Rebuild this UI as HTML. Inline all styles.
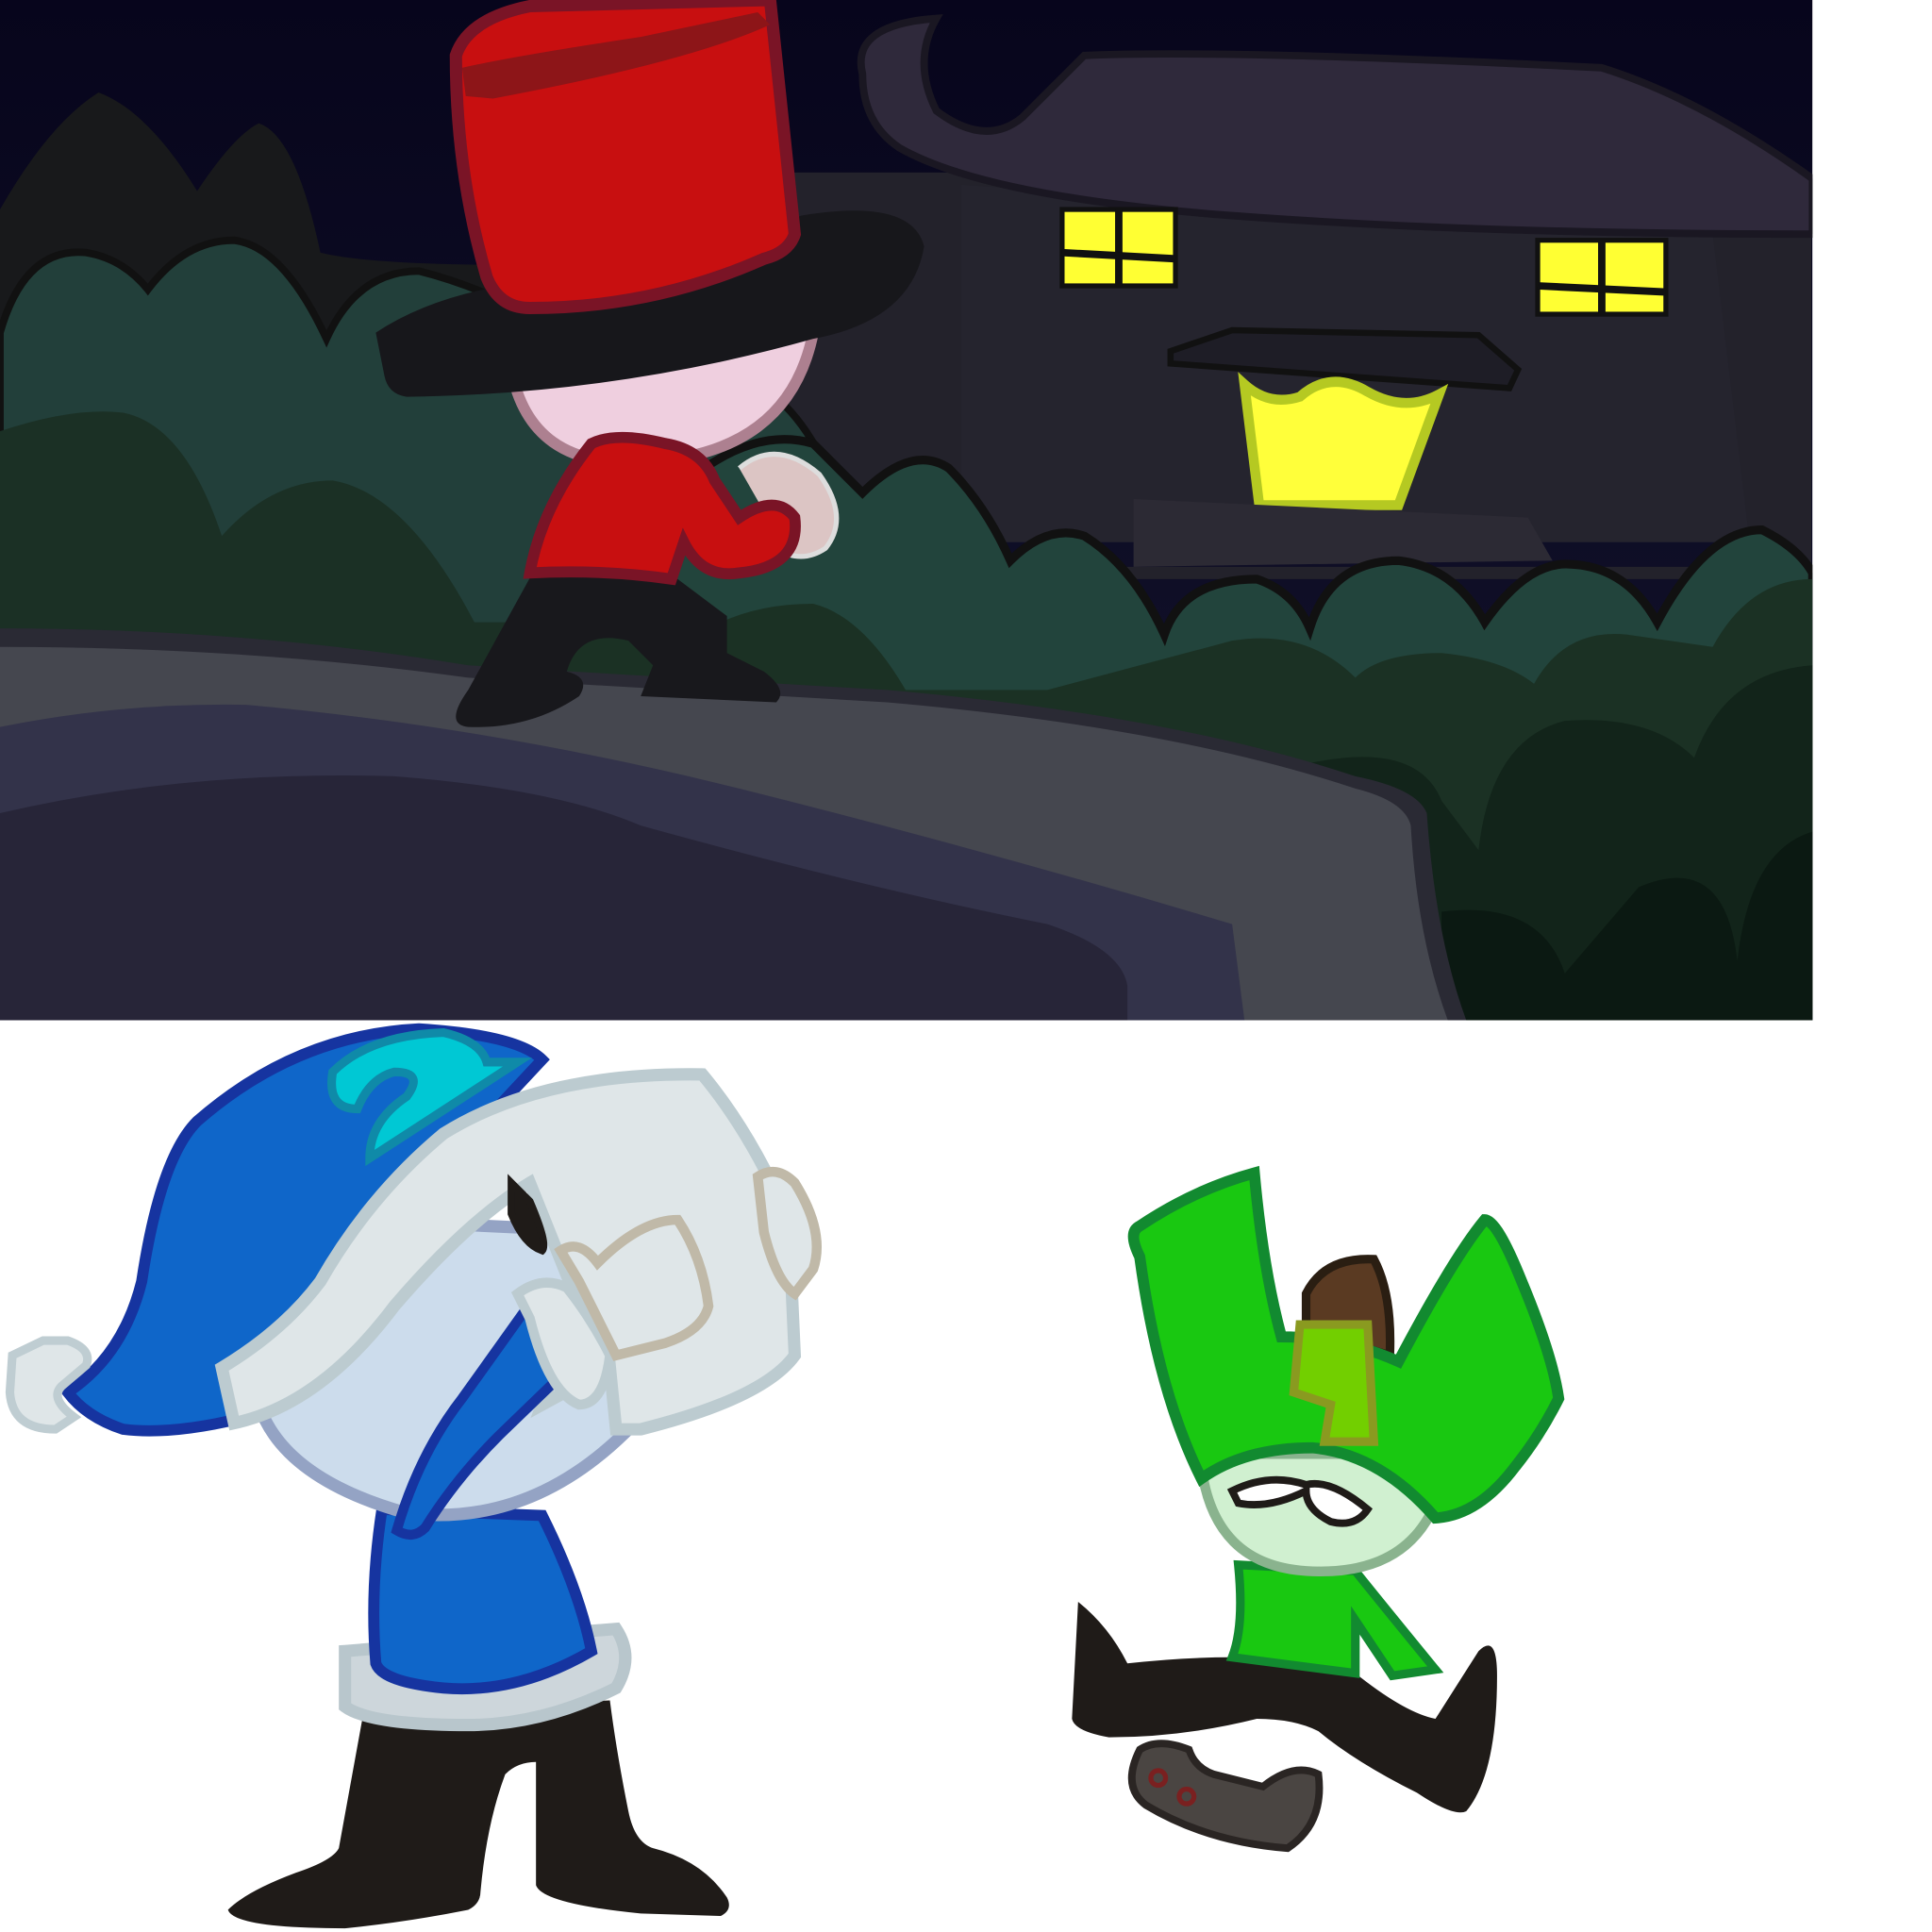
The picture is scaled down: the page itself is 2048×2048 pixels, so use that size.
<!DOCTYPE html>
<html><head><meta charset="utf-8"><style>html,body{margin:0;padding:0;background:#fff}svg{display:block}</style></head>
<body>
<svg width="2048" height="2048" viewBox="0 0 1568 1568" xmlns="http://www.w3.org/2000/svg">
<defs>
<linearGradient id="sky" x1="0" y1="0" x2="0" y2="1"><stop offset="0" stop-color="#07051c"/><stop offset="1" stop-color="#15152e"/></linearGradient>
<clipPath id="sc"><rect x="0" y="0" width="1471" height="828"/></clipPath>
</defs>
<rect width="1568" height="1568" fill="#fff"/>
<g clip-path="url(#sc)">
<rect x="0" y="0" width="1471" height="828" fill="url(#sky)"/>
<path d="M0 170 Q40 100 80 75 Q120 90 160 155 Q190 110 210 100 Q240 110 260 205 Q300 215 420 215 L420 400 L0 400Z" fill="#18191b"/>
<!-- house -->
<path d="M620 140 L830 140 L790 460 L1420 460 L1380 190 L1470 190 L1470 470 L620 470Z" fill="#23222b"/>
<path d="M780 150 L1390 190 L1420 440 L780 440Z" fill="#25242e"/>
<path d="M700 60 Q690 20 760 15 Q740 50 760 90 Q800 120 830 95 L880 45 Q1000 40 1300 55 Q1380 80 1471 145 L1471 190 Q1200 190 1000 175 Q800 160 730 120 Q700 100 700 60Z" fill="#2f293b" stroke="#1a1722" stroke-width="6"/>
<g fill="#ffff33" stroke="#111" stroke-width="4">
<rect x="862" y="170" width="92" height="62"/>
<rect x="1248" y="195" width="104" height="60"/>
</g>
<g stroke="#111" stroke-width="6"><line x1="908" y1="170" x2="908" y2="232"/><line x1="862" y1="205" x2="954" y2="210"/><line x1="1300" y1="195" x2="1300" y2="255"/><line x1="1248" y1="232" x2="1352" y2="237"/></g>
<path d="M950 285 L1000 268 L1200 272 L1232 300 L1225 315 L950 295Z" fill="#1e1d26" stroke="#111" stroke-width="5"/>
<path d="M1010 312 Q1030 330 1055 322 Q1080 300 1110 318 Q1140 335 1168 320 L1135 410 L1022 410Z" fill="#ffff3a" stroke="#b5c922" stroke-width="8"/>
<path d="M920 405 L1240 420 L1260 455 L920 460Z" fill="#2c2a34"/>
<!-- back trees -->
<path d="M0 270 Q20 200 70 205 Q100 210 120 235 Q150 195 190 195 Q230 200 265 275 Q290 220 340 220 Q380 230 420 250 Q520 250 600 300 Q650 330 670 380 L680 560 L0 560Z" fill="#223f3a" stroke="#111" stroke-width="6"/>
<path d="M0 350 Q60 330 100 335 Q150 345 180 435 Q220 390 270 390 Q330 400 385 505 L420 505 L420 560 L0 560Z" fill="#1b3025"/>
<!-- mid trees -->
<path d="M430 560 Q560 330 660 360 Q690 390 700 400 Q740 360 770 380 Q800 410 820 455 Q850 425 880 435 Q920 460 945 515 Q960 470 1020 470 Q1050 480 1063 510 Q1080 455 1135 455 Q1180 460 1205 505 Q1240 455 1275 458 Q1320 460 1345 505 Q1385 430 1430 430 Q1460 445 1471 465 L1471 828 L430 828Z" fill="#22443c" stroke="#111" stroke-width="7"/>
<path d="M380 560 Q430 480 480 470 L560 520 Q600 490 660 490 Q700 500 735 560 L850 560 L1000 520 Q1060 510 1100 550 Q1120 530 1170 530 Q1220 535 1245 555 Q1270 510 1320 515 L1390 525 Q1420 470 1471 470 L1471 828 L380 828Z" fill="#1b3124"/>
<path d="M1060 620 Q1150 600 1170 650 L1200 690 Q1210 600 1270 585 Q1340 580 1375 615 Q1400 545 1471 540 L1471 828 L1060 828Z" fill="#12241a"/>
<path d="M1170 740 Q1250 730 1270 790 L1330 720 Q1400 690 1410 780 Q1420 690 1471 675 L1471 828 L1170 828Z" fill="#0b1912"/>
<!-- road -->
<path d="M0 510 Q200 510 380 540 L720 560 Q950 580 1100 630 Q1150 640 1158 660 Q1165 760 1190 828 L0 828Z" fill="#2a2a34"/>
<path d="M0 525 Q200 525 380 550 L720 570 Q950 590 1100 640 Q1140 650 1145 670 Q1150 760 1175 828 L0 828Z" fill="#45474f"/>
<path d="M0 590 Q100 570 200 572 Q400 590 600 640 Q800 690 1000 750 L1010 828 L0 828Z" fill="#33334a"/>
<path d="M0 660 Q150 625 320 630 Q450 640 520 670 Q700 720 850 750 Q910 770 915 800 L915 828 L0 828Z" fill="#272538"/>
<!-- red character -->
<path d="M415 300 Q430 380 520 375 Q640 370 660 270 L600 260Z" fill="#efcfdf" stroke="#ad8090" stroke-width="9"/>
<path d="M435 460 L380 560 Q360 588 380 590 Q430 592 470 565 Q480 550 460 545 Q470 510 510 520 L530 540 L520 565 L630 570 Q640 560 620 545 L590 530 L590 500 L550 470Z" fill="#18181c"/>
<path d="M600 380 Q630 355 665 385 Q690 420 670 445 Q655 455 640 450" fill="#dcc5c4" stroke="#ddd" stroke-width="4"/>
<path d="M430 465 Q440 410 480 360 Q500 350 540 360 Q570 365 580 390 L600 420 Q630 400 645 420 Q650 460 600 465 Q570 470 555 440 L545 470 Q490 462 430 465Z" fill="#c80f10" stroke="#7a1426" stroke-width="9"/>
<path d="M305 270 Q350 240 420 230 Q560 220 650 175 Q740 160 750 200 Q740 260 660 275 Q500 320 330 322 Q315 320 312 305Z" fill="#17171b"/>
<path d="M370 45 Q380 15 430 5 L625 0 L645 190 Q640 205 620 210 Q530 250 430 250 Q405 250 395 225 Q370 140 370 45Z" fill="#c80f10" stroke="#7a1426" stroke-width="10"/>
<path d="M375 55 Q420 45 520 30 L615 10 L625 20 Q560 50 400 80 L378 78Z" fill="#8d1518"/>
</g>
<!-- blue character -->
<path d="M295 1390 L275 1500 Q270 1510 240 1520 Q200 1535 185 1550 Q190 1565 280 1565 Q330 1560 380 1550 Q390 1545 390 1535 Q395 1480 410 1440 Q420 1430 435 1430 L435 1530 Q440 1545 520 1553 L585 1555 Q595 1550 590 1540 Q570 1510 530 1500 Q515 1495 510 1470 Q500 1420 495 1380Z" fill="#1f1b18"/>
<path d="M280 1340 L500 1322 Q515 1345 500 1370 Q440 1400 380 1400 Q300 1400 280 1385Z" fill="#cdd6db" stroke="#b8c6cc" stroke-width="10"/>
<path d="M310 1225 Q300 1290 305 1350 Q310 1365 360 1370 Q420 1375 480 1340 Q470 1290 440 1230Z" fill="#0f66c9" stroke="#1634a0" stroke-width="9"/>
<path d="M210 1140 Q230 1200 330 1228 Q430 1240 510 1160 L500 1000 L290 990Z" fill="#ccdcec" stroke="#94a3c4" stroke-width="10"/>
<path d="M55 1130 Q100 1100 115 1040 Q130 940 160 910 Q240 840 340 835 Q420 840 440 860 L300 1010 Q220 1110 200 1150 Q140 1165 100 1160 Q70 1150 55 1130Z" fill="#0f66c9" stroke="#1634a0" stroke-width="9"/>
<path d="M270 870 Q300 840 360 838 Q390 845 395 862 L420 862 L300 940 Q300 910 330 890 Q345 870 320 870 Q300 875 290 900 Q265 900 270 870Z" fill="#00c8d4" stroke="#0f8aa8" stroke-width="7"/>
<path d="M10 1100 L35 1088 L55 1088 Q75 1095 70 1108 L50 1125 Q40 1135 60 1150 L45 1160 Q10 1160 8 1130Z" fill="#dfe6e8" stroke="#bfcdd2" stroke-width="7"/>
<path d="M180 1110 Q230 1080 260 1040 Q300 970 360 920 Q440 870 570 872 Q610 920 640 990 L645 1100 Q620 1135 520 1160 L500 1160 L495 1110 L440 1140 L470 1060 L430 960 Q380 990 320 1060 Q260 1140 190 1155Z" fill="#dfe6e8" stroke="#bccbd0" stroke-width="10"/>
<path d="M425 1065 Q400 1100 375 1135 Q340 1180 322 1242 Q335 1250 345 1240 Q370 1200 405 1165 L462 1110 L450 1080Z" fill="#0f66c9" stroke="#1634a0" stroke-width="8"/>
<path d="M420 1050 Q440 1035 460 1045 Q480 1070 495 1100 Q490 1140 470 1140 Q445 1130 430 1070Z" fill="#dfe6e8" stroke="#bccbd0" stroke-width="8"/>
<path d="M455 1015 Q470 1005 485 1025 Q520 990 550 990 Q570 1020 575 1060 Q570 1080 540 1090 L500 1100 L470 1040Z" fill="#dfe6e8" stroke="#c0b9a8" stroke-width="8"/>
<path d="M615 955 Q630 945 645 960 Q670 1000 660 1030 L645 1050 Q630 1040 620 1000Z" fill="#dfe6e8" stroke="#c0b9a8" stroke-width="8"/>
<path d="M415 960 L430 975 Q445 1010 440 1015 Q425 1010 415 985Z" fill="#1f1b18" stroke="#1f1b18" stroke-width="6"/>
<!-- green character -->
<path d="M875 1300 Q900 1320 915 1350 Q960 1345 1000 1345 L1100 1358 Q1140 1390 1165 1395 L1200 1340 Q1215 1325 1215 1360 Q1215 1440 1190 1470 Q1180 1475 1150 1455 Q1100 1430 1070 1405 Q1050 1395 1020 1395 Q960 1410 900 1410 Q872 1405 870 1395Z" fill="#1f1b18"/>
<path d="M925 1420 Q940 1410 965 1420 Q970 1435 985 1440 L1025 1450 Q1050 1430 1070 1440 Q1075 1480 1045 1500 Q980 1495 930 1465 Q910 1450 925 1420Z" fill="#4a4542" stroke="#2a2523" stroke-width="6"/>
<circle cx="940" cy="1443" r="6" fill="none" stroke="#7a2020" stroke-width="4"/><circle cx="963" cy="1458" r="6" fill="none" stroke="#7a2020" stroke-width="4"/>
<path d="M1005 1270 Q1010 1320 1000 1345 L1100 1358 L1100 1315 L1130 1360 L1165 1355 Q1120 1300 1100 1275Z" fill="#19c811" stroke="#128a30" stroke-width="7"/>
<path d="M975 1190 Q985 1270 1060 1275 Q1140 1280 1165 1220 L1140 1180 L985 1180Z" fill="#d0f0d0" stroke="#8ab38e" stroke-width="8"/>
<path d="M1000 1210 Q1030 1195 1060 1205 Q1080 1200 1110 1225 Q1100 1240 1080 1235 Q1060 1225 1060 1210 Q1030 1225 1005 1220Z" fill="#fff" stroke="#1f1b18" stroke-width="6"/>
<path d="M1060 1050 Q1075 1020 1115 1022 Q1130 1050 1128 1100 L1060 1080Z" fill="#5a3a22" stroke="#2a1e12" stroke-width="7"/>
<path d="M975 1200 Q940 1130 925 1020 Q915 1000 925 995 Q970 965 1018 952 Q1025 1030 1040 1085 Q1090 1085 1135 1105 Q1180 1020 1205 990 Q1215 990 1235 1040 Q1260 1100 1265 1135 Q1250 1165 1230 1190 Q1200 1230 1165 1232 Q1120 1180 1065 1175 Q1010 1175 975 1200Z" fill="#19c811" stroke="#128a30" stroke-width="9"/>
<path d="M1055 1075 L1110 1075 L1115 1170 L1075 1170 L1080 1140 L1050 1130Z" fill="#72cf00" stroke="#8a9a20" stroke-width="7"/>
</svg>
</body></html>
